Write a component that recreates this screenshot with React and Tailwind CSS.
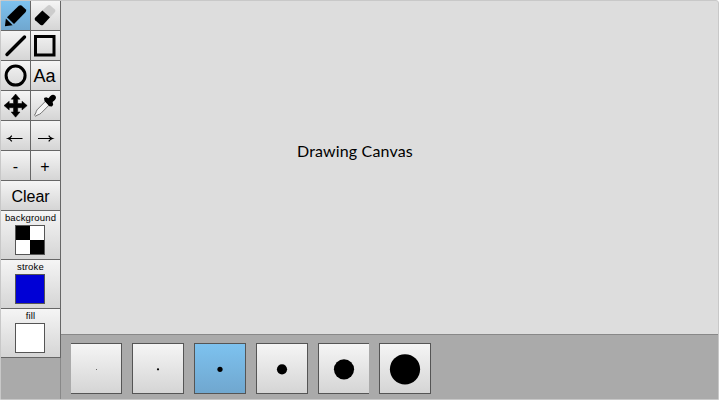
import React from 'react';

const surface = 'bg-linear-to-b from-[#f5f5f5] to-[#d5d5d5]';
const activeSurface = 'bg-linear-to-b from-[#7dc2ef] to-[#70a7cf]';

function Tool({ active, label, children }) {
  return (
    <button
      aria-label={label}
      className={`flex h-[30px] w-[30px] items-center justify-center overflow-hidden border-r border-b border-[#666] ${active ? activeSurface : surface}`}
    >
      {children}
    </button>
  );
}

function Icon({ children }) {
  return (
    <svg width="29" height="29" viewBox="0 0 29 29" className="shrink-0">
      {children}
    </svg>
  );
}

function ColorWell({ label, children }) {
  return (
    <div className={`flex h-[49px] w-[60px] flex-col items-center border-r border-b border-[#666] ${surface}`}>
      <span className="h-[14px] text-[9.5px] leading-[13px] tracking-[0.15px] whitespace-nowrap">{label}</span>
      <div className="-ml-px h-[30px] w-[30px] border border-[#555]">{children}</div>
    </div>
  );
}

const brushes = [
  { size: 1, box: 'w-[51px] border-y border-r', dot: '#666' },
  { size: 2.2, box: 'ml-[10px] w-[52px] border', dot: '#000' },
  { size: 5.2, box: 'ml-[10px] w-[52px] border', dot: '#000', active: true },
  { size: 10.2, box: 'ml-[10px] w-[52px] border', dot: '#000' },
  { size: 20.2, box: 'ml-[10px] w-[51px] border-y border-l', dot: '#000' },
  { size: 30.2, box: 'ml-[10px] w-[52px] border', dot: '#000' },
];

export default function App() {
  return (
    <div className="flex h-[400px] w-[719px] overflow-hidden rounded-tr-[3px] border border-[#c8c8c8] bg-[#ddd] font-['Liberation_Sans',Arial,sans-serif] text-black">
      <aside className="flex w-[60px] shrink-0 flex-col bg-[#aaa]">
        <div className="grid grid-cols-[30px_30px]">
          <Tool active label="Pencil">
            <Icon>
              <path d="M6 16.2 17.8 4.8Q19.2 3.6 20.5 4.6L24.6 8.3Q25.8 9.6 24.7 11L13 23Z" />
              <path d="M4.9 17.6 11.6 24.2 3.9 25.2Z" />
            </Icon>
          </Tool>
          <Tool label="Eraser">
            <Icon>
              <path d="M11 9.8 16.9 4.5Q18.2 3.6 19.4 4.5L23.9 8.6Q25 9.8 24 11L18.5 17Z" fill="#ccc" />
              <path d="M11.3 9.5 19 16.3 12.2 23.7Q10.9 24.9 9.6 23.9L4.2 19.2Q3 18 4.1 16.7Z" />
            </Icon>
          </Tool>
          <Tool label="Line">
            <Icon>
              <path d="M6 23.5 23.5 6" stroke="#000" strokeWidth="3.4" strokeLinecap="round" />
            </Icon>
          </Tool>
          <Tool label="Rectangle">
            <Icon>
              <rect x="4.5" y="5.5" width="18.5" height="18.5" fill="none" stroke="#000" strokeWidth="3" />
            </Icon>
          </Tool>
          <Tool label="Ellipse">
            <Icon>
              <circle cx="14.6" cy="14.6" r="9.5" fill="none" stroke="#000" strokeWidth="3" />
            </Icon>
          </Tool>
          <Tool label="Text">
            <span className="-ml-[2px] text-[18px] leading-none">Aa</span>
          </Tool>
          <Tool label="Pan">
            <Icon>
              <path d="M14.6 3 19 8.2H16.7V12.5H21V10.2L26.2 14.6 21 19V16.7H16.7V21H19L14.6 26.2 10.2 21H12.5V16.7H8.2V19L3 14.6 8.2 10.2V12.5H12.5V8.2H10.2Z" stroke="#000" strokeWidth="0.5" strokeLinejoin="round" />
            </Icon>
          </Tool>
          <Tool label="Eyedropper">
            <Icon>
              <path d="M14.5 10.2 6 18.9Q5.2 20.3 4.8 22L3.5 24.2 4.5 25.1 7 23.8Q8.8 23.4 10 22.2L18.4 13.8Z" fill="#f5f5f5" stroke="#555" strokeWidth="0.8" />
              <path d="M13 7 15.2 6.3 17.5 7.2 19.4 5.1Q21.8 2.9 24 4.6 26 6.8 23.9 9L21.6 11 22.2 13.8 20.9 15.6 18.4 15.2 13.5 9.9Z" />
            </Icon>
          </Tool>
          <Tool label="Undo">
            <Icon>
              <path d="M21.5 17.5H7.5M10.8 14.6Q9.5 16.8 7 17.5 9.5 18.2 10.8 20.4" fill="none" stroke="#000" strokeWidth="1.2" />
            </Icon>
          </Tool>
          <Tool label="Redo">
            <Icon>
              <path d="M7 17.5H21M17.7 14.6Q19 16.8 21.5 17.5 19 18.2 17.7 20.4" fill="none" stroke="#000" strokeWidth="1.2" />
            </Icon>
          </Tool>
          <Tool label="Zoom out">
            <span className="pt-[3px] text-[16px] leading-none">-</span>
          </Tool>
          <Tool label="Zoom in">
            <span className="pt-[3px] pr-px text-[16px] leading-none">+</span>
          </Tool>
        </div>
        <button className={`h-[30px] w-[60px] border-r border-b border-[#666] pt-[2px] text-[16px] leading-[27px] ${surface}`}>Clear</button>
        <ColorWell label="background">
          <div className="grid h-full grid-cols-2 grid-rows-2 bg-white">
            <div className="bg-black" />
            <div />
            <div />
            <div className="bg-black" />
          </div>
        </ColorWell>
        <ColorWell label="stroke">
          <div className="h-full bg-[#0000d6]" />
        </ColorWell>
        <ColorWell label="fill">
          <div className="h-full bg-white" />
        </ColorWell>
        <div className="flex-1 border-r border-[#888]" />
      </aside>
      <main className="flex flex-1 flex-col">
        <div className="h-[333px] pt-[139px] pl-[236px]">
          <p className="font-['Lato','Open_Sans',sans-serif] text-[16px] leading-[22px] tracking-[0.15px] whitespace-nowrap">Drawing Canvas</p>
        </div>
        <div className="flex h-[65px] border-t border-[#888] bg-[#aaa] pt-[8px] pl-[10px]">
          {brushes.map((b) => (
            <button
              key={b.size}
              aria-label={`Brush ${b.size}`}
              className={`flex h-[51px] shrink-0 items-center justify-center border-[#555] ${b.box} ${b.active ? activeSurface : surface}`}
            >
              <svg width={50} height={49} viewBox="-25 -25 50 49" className="shrink-0">
                {b.size === 1 ? <rect width="1" height="1" fill={b.dot} /> : <circle cx="0" cy="0.3" r={b.size / 2} fill={b.dot} />}
              </svg>
            </button>
          ))}
        </div>
      </main>
    </div>
  );
}
